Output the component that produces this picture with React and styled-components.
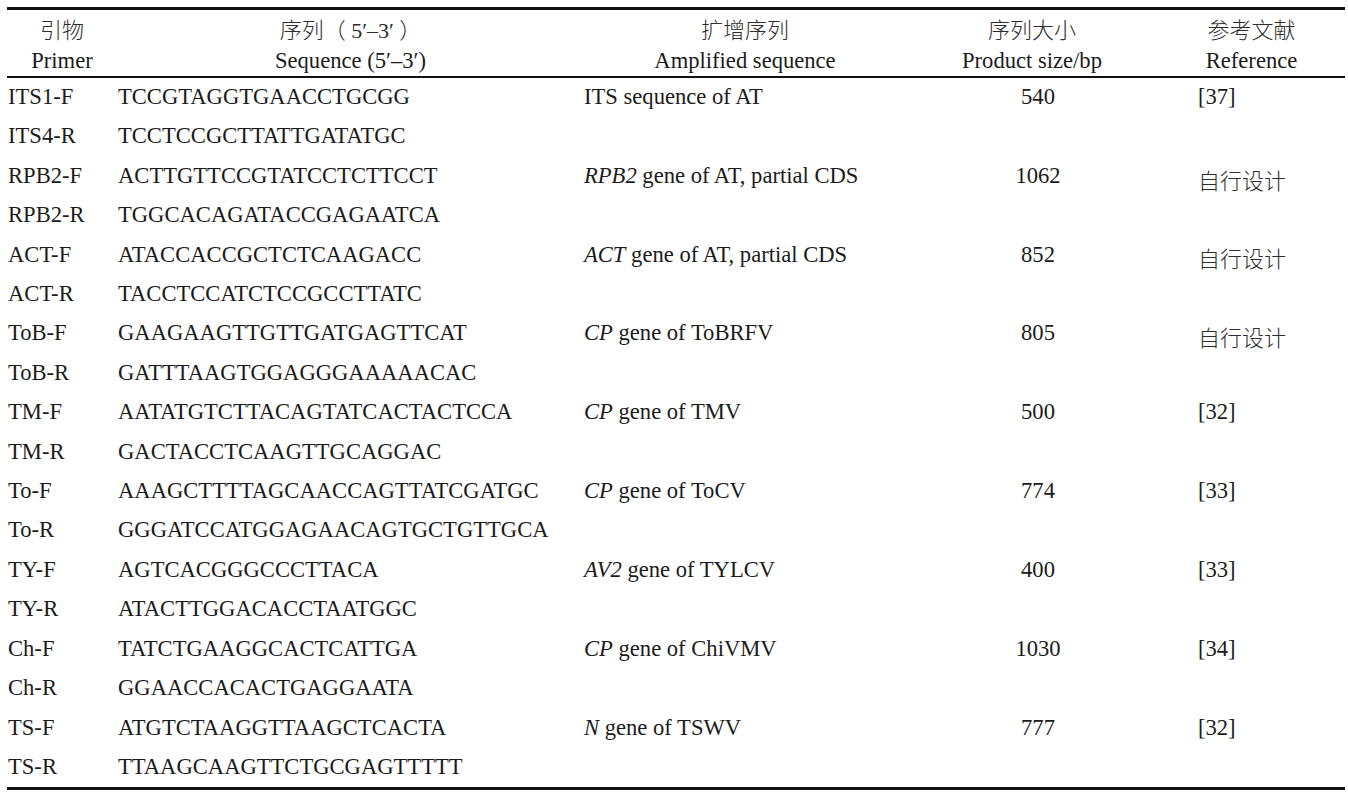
import styled, { createGlobalStyle } from "styled-components";

const rows = [
  { primer: "ITS1-F", seq: "TCCGTAGGTGAACCTGCGG", gene: "", target: "ITS sequence of AT", size: "540", ref: "[37]" },
  { primer: "ITS4-R", seq: "TCCTCCGCTTATTGATATGC" },
  { primer: "RPB2-F", seq: "ACTTGTTCCGTATCCTCTTCCT", gene: "RPB2", target: " gene of AT, partial CDS", size: "1062", ref: "自行设计" },
  { primer: "RPB2-R", seq: "TGGCACAGATACCGAGAATCA" },
  { primer: "ACT-F", seq: "ATACCACCGCTCTCAAGACC", gene: "ACT", target: " gene of AT, partial CDS", size: "852", ref: "自行设计" },
  { primer: "ACT-R", seq: "TACCTCCATCTCCGCCTTATC" },
  { primer: "ToB-F", seq: "GAAGAAGTTGTTGATGAGTTCAT", gene: "CP", target: " gene of ToBRFV", size: "805", ref: "自行设计" },
  { primer: "ToB-R", seq: "GATTTAAGTGGAGGGAAAAACAC" },
  { primer: "TM-F", seq: "AATATGTCTTACAGTATCACTACTCCA", gene: "CP", target: " gene of TMV", size: "500", ref: "[32]" },
  { primer: "TM-R", seq: "GACTACCTCAAGTTGCAGGAC" },
  { primer: "To-F", seq: "AAAGCTTTTAGCAACCAGTTATCGATGC", gene: "CP", target: " gene of ToCV", size: "774", ref: "[33]" },
  { primer: "To-R", seq: "GGGATCCATGGAGAACAGTGCTGTTGCA" },
  { primer: "TY-F", seq: "AGTCACGGGCCCTTACA", gene: "AV2", target: " gene of TYLCV", size: "400", ref: "[33]" },
  { primer: "TY-R", seq: "ATACTTGGACACCTAATGGC" },
  { primer: "Ch-F", seq: "TATCTGAAGGCACTCATTGA", gene: "CP", target: " gene of ChiVMV", size: "1030", ref: "[34]" },
  { primer: "Ch-R", seq: "GGAACCACACTGAGGAATA" },
  { primer: "TS-F", seq: "ATGTCTAAGGTTAAGCTCACTA", gene: "N", target: " gene of TSWV", size: "777", ref: "[32]" },
  { primer: "TS-R", seq: "TTAAGCAAGTTCTGCGAGTTTTT" },
];

const heads = [
  { zh: "引物", en: "Primer" },
  { zh: "序列（ 5′–3′ ）", en: "Sequence (5′–3′)" },
  { zh: "扩增序列", en: "Amplified sequence" },
  { zh: "序列大小", en: "Product size/bp" },
  { zh: "参考文献", en: "Reference" },
];

export default function App() {
  return (
    <>
      <GlobalStyle />
      <Page>
        <Table>
          <colgroup>
            <col style={{ width: 110 }} />
            <col style={{ width: 467 }} />
            <col style={{ width: 322 }} />
            <col style={{ width: 252 }} />
            <col style={{ width: 187 }} />
          </colgroup>
          <thead>
            <tr>
              {heads.map((h) => (
                <HeadCell key={h.en}>
                  <Zh>{h.zh}</Zh>
                  <En>{h.en}</En>
                </HeadCell>
              ))}
            </tr>
          </thead>
          <tbody>
            {rows.map((row) => (
              <tr key={row.primer}>
                <Cell $pad={1}>{row.primer}</Cell>
                <Cell $pad={1}>{row.seq}</Cell>
                <Cell $pad={0}>
                  {row.gene && <Gene>{row.gene}</Gene>}
                  {row.target}
                </Cell>
                <Cell $pad={12} $center>
                  {row.size}
                </Cell>
                <Cell $pad={40}>
                  {row.ref && (row.ref.startsWith("[") ? row.ref : <RefZh>{row.ref}</RefZh>)}
                </Cell>
              </tr>
            ))}
          </tbody>
        </Table>
      </Page>
    </>
  );
}

const GlobalStyle = createGlobalStyle`
  body {
    margin: 0;
    background: #ffffff;
  }
`;

const Page = styled.div`
  padding: 7px 3px 0 7px;
  font-family: "Liberation Serif", "Noto Sans CJK SC", serif;
  font-size: 22.6px;
  color: #1b1b1b;
`;

const Table = styled.table`
  width: 1338px;
  border-collapse: collapse;
  table-layout: fixed;
  border-top: 3px solid #111;
  border-bottom: 3px solid #111;
`;

const HeadCell = styled.th`
  font-weight: normal;
  text-align: center;
  padding: 6px 0 0;
  border-bottom: 2px solid #111;
  vertical-align: top;
`;

const Zh = styled.span`
  display: block;
  line-height: 30px;
  font-family: "Liberation Serif", "Noto Sans CJK SC", sans-serif;
  font-weight: 300;
  font-size: 22px;
  color: #2e2e2e;
`;

const En = styled.span`
  display: block;
  line-height: 30px;
  margin-top: 0;
`;

const Cell = styled.td`
  height: 37.9px;
  line-height: 37.9px;
  padding: 0 0 1.5px ${(p) => p.$pad}px;
  text-align: ${(p) => (p.$center ? "center" : "left")};
  white-space: nowrap;
  vertical-align: top;
`;

const RefZh = styled.span`
  display: inline-block;
  line-height: 20px;
  vertical-align: middle;
  font-family: "Noto Sans CJK SC", sans-serif;
  font-weight: 300;
  font-size: 22px;
  color: #2e2e2e;
  position: relative;
  top: 1px;
`;

const Gene = styled.i`
  font-style: italic;
`;
